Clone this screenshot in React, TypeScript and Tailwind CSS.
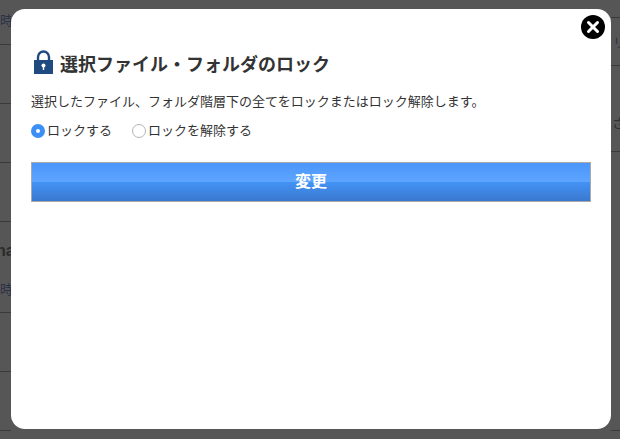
import { X } from "lucide-react";

function LeftRow({ height, children }: { height: string; children?: React.ReactNode }) {
    return <div className={`${height} border-b border-[#3a3a3a] flex flex-col whitespace-nowrap`}>{children}</div>;
}

export default function App() {
    return (
        <div className="relative w-[620px] h-[439px] overflow-hidden bg-[#565656] font-['Liberation_Sans','Noto_Sans_CJK_JP',sans-serif]">
            {/* page behind the overlay, only the strips beside the modal show */}
            <div className="flex justify-between">
                <div className="w-[11px] overflow-hidden flex flex-col text-[13px] text-[#2a3247]">
                    <LeftRow height="h-[45px]">
                        <span className="mt-[11px]">時</span>
                    </LeftRow>
                    <LeftRow height="h-[59px]" />
                    <LeftRow height="h-[59px]" />
                    <LeftRow height="h-[59px]" />
                    <LeftRow height="h-[91px]">
                        <span className="mt-[20px] -ml-[4px] text-[16px] font-bold leading-[18px] text-[#2a2a2a]">na</span>
                        <span className="mt-[20px]">時</span>
                    </LeftRow>
                    <LeftRow height="h-[59px]" />
                    <LeftRow height="h-[59px]" />
                </div>
                <div className="w-[9px] overflow-hidden flex flex-col text-[13px] text-[#2a2a2a]">
                    <LeftRow height="h-[18px]" />
                    <LeftRow height="h-[48px]">
                        <span className="mt-[15px] ml-[2px] text-[#2a3247]">リ</span>
                    </LeftRow>
                    <LeftRow height="h-[86px]">
                        <span className="mt-[48px] ml-[1px]">さ</span>
                    </LeftRow>
                    <LeftRow height="h-[279px]" />
                </div>
            </div>

            {/* modal */}
            <div className="absolute left-[11px] top-[9px] w-[600px] h-[420px] bg-white rounded-[14px] px-5 pt-[41px]">
                <div className="flex items-start gap-[7px] h-[24px] ml-[3px]">
                    <svg width="19" height="24" viewBox="0 0 19 24">
                        <path d="M4 11V7a5.5 5.5 0 0 1 11 0V11" fill="none" stroke="#1f4a80" strokeWidth="2.4" />
                        <rect x="0" y="10" width="19" height="14" fill="#1f4a80" />
                        <circle cx="9.5" cy="15.5" r="2" fill="#fff" />
                        <rect x="8.8" y="15.5" width="1.4" height="4.5" fill="#fff" />
                    </svg>
                    <h1 className="mt-[6px] text-[18px] font-bold text-[#333333] leading-none whitespace-nowrap">
                        選択ファイル・フォルダのロック
                    </h1>
                </div>
                <p className="mt-[18px] text-[13px] leading-[20px] text-[#333333]">
                    選択したファイル、フォルダ階層下の全てをロックまたはロック解除します。
                </p>
                <div className="mt-[9px] flex items-center gap-[20px] text-[13px] leading-[20px] text-[#333333]">
                    <label className="flex items-center gap-[2px]">
                        <span className="w-[14px] h-[14px] rounded-full bg-[#3b8ff5] flex items-center justify-center">
                            <span className="w-1 h-1 rounded-full bg-white" />
                        </span>
                        ロックする
                    </label>
                    <label className="flex items-center gap-[2px]">
                        <span className="w-[14px] h-[14px] rounded-full border-[1.5px] border-[#b4b4b4] bg-white" />
                        ロックを解除する
                    </label>
                </div>
                <button className="mt-[21px] w-[560px] h-[40px] border border-[#aaaaaa] bg-clip-padding bg-[linear-gradient(to_bottom,#4b96fb_0%,#5ea5ff_50%,#4393f5_50%,#3a78cf_100%)] text-white text-[16px] font-bold">
                    変更
                </button>
            </div>

            {/* close button */}
            <button className="absolute left-[581px] top-[15px] w-6 h-6 rounded-full bg-black flex items-center justify-center">
                <X size={18} strokeWidth={4} color="#fff" />
            </button>
        </div>
    );
}
